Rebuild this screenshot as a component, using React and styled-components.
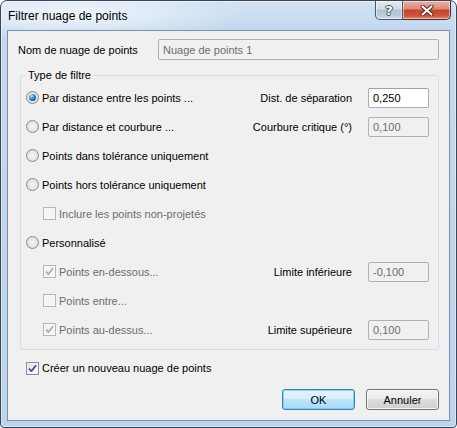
import React from 'react';
import styled, { createGlobalStyle } from 'styled-components';

const GlobalStyle = createGlobalStyle`
  html, body {
    margin: 0;
    padding: 0;
    background: #ffffff;
  }
  body {
    font-family: "Liberation Sans", Arial, sans-serif;
    font-size: 11px;
    color: #000000;
  }
`;

const Window = styled.div`
  box-sizing: border-box;
  width: 457px;
  height: 428px;
  display: flex;
  flex-direction: column;
  border: 1px solid #3b4654;
  border-radius: 7px 7px 4px 4px;
  padding: 0 6px 6px 6px;
  background:
    radial-gradient(ellipse 170px 26px at 70px 14px, rgba(255, 255, 255, 0.75), rgba(255, 255, 255, 0) 100%),
    linear-gradient(to bottom, #d3e3f4 0px, #c2d8ef 30px, #bcd4ee 100%);
  box-shadow: inset 0 0 0 1px rgba(255, 255, 255, 0.45);
`;

const TitleBar = styled.div`
  height: 29px;
  flex: none;
  display: flex;
  justify-content: space-between;
  align-items: flex-start;
`;

const Title = styled.div`
  padding: 7px 0 0 1px;
  font-size: 12px;
  line-height: 16px;
  color: #000000;
`;

const CaptionButtons = styled.div`
  display: flex;
  margin-right: -1px;
`;

const CaptionButton = styled.div`
  box-sizing: border-box;
  width: ${p => (p.$kind === 'close' ? 48 : 28)}px;
  height: 19px;
  display: flex;
  align-items: center;
  justify-content: center;
  border: 1px solid ${p => (p.$kind === 'close' ? '#4c2a2a' : '#4a5868')};
  border-top: none;
  border-left-width: ${p => (p.$kind === 'close' ? 0 : 1)}px;
  border-radius: ${p => (p.$kind === 'close' ? '0 0 5px 0' : '0 0 0 5px')};
  background: ${p =>
    p.$kind === 'close'
      ? 'linear-gradient(to bottom, #eab0a3 0%, #dc8a78 45%, #c6432a 50%, #cf5437 80%, #e2875f 100%)'
      : 'linear-gradient(to bottom, #e4ebf3 0%, #cfdae6 45%, #b4c3d4 50%, #bccbdc 80%, #d2e0ee 100%)'};
  box-shadow: inset 0 0 0 1px rgba(255, 255, 255, 0.5);
`;

const HelpGlyph = styled.span`
  font-family: "DejaVu Sans", sans-serif;
  font-weight: bold;
  font-size: 13px;
  line-height: 13px;
  color: #ffffff;
  text-shadow: 1px 0 0 #3d4a5a, -1px 0 0 #3d4a5a, 0 1px 0 #3d4a5a, 0 -1px 0 #3d4a5a;
`;

const Client = styled.div`
  box-sizing: border-box;
  flex: 1;
  display: flex;
  flex-direction: column;
  border: 1px solid #7f8fa3;
  background: #f0f0f0;
  padding: 8px 10px 10px 10px;
`;

const NameRow = styled.div`
  display: flex;
  align-items: center;
  height: 21px;
`;

const NameLabel = styled.div`
  width: 140px;
  flex: none;
`;

const Field = styled.div`
  box-sizing: border-box;
  height: ${p => p.$h || 20}px;
  flex: 1;
  display: flex;
  align-items: center;
  padding: 0 4px;
  border: 1px solid ${p => (p.$disabled ? '#adb2b5' : '#abadb3')};
  border-top-color: ${p => (p.$disabled ? '#adb2b5' : '#9da1a8')};
  border-radius: 2px;
  background: ${p => (p.$disabled ? '#f0f0f0' : '#ffffff')};
  color: ${p => (p.$disabled ? '#6d6d6d' : '#000000')};
`;

const Group = styled.fieldset`
  margin: 7px 0 0 2px;
  padding: 0 9px 5px 5px;
  border: 1px solid #d5dfe5;
  border-radius: 3px;
  min-width: 0;
`;

const Legend = styled.legend`
  padding: 0 2px;
  line-height: 16px;
`;

const OptionRow = styled.div`
  height: ${p => p.$h || 29}px;
  display: grid;
  grid-template-columns: 1fr auto 61px;
  column-gap: 16px;
  align-items: center;
`;

const Option = styled.div`
  display: flex;
  align-items: center;
  gap: 3px;
  padding-left: ${p => p.$indent || 0}px;
  color: ${p => (p.$disabled ? '#6d6d6d' : '#000000')};
  white-space: nowrap;
`;

const RightLabel = styled.div`
  text-align: right;
  white-space: nowrap;
`;

const RadioMark = styled.span`
  box-sizing: border-box;
  width: 13px;
  height: 13px;
  flex: none;
  border-radius: 50%;
  border: 1px solid #8a8c8e;
  background: radial-gradient(circle at 50% 50%, #f6f6f6 0%, #e6e6e6 55%, #c9c9c9 100%);
  display: flex;
  align-items: center;
  justify-content: center;

  &::after {
    content: '';
    display: ${p => (p.$checked ? 'block' : 'none')};
    width: 7px;
    height: 7px;
    border-radius: 50%;
    background: radial-gradient(circle at 35% 30%, #b9e4fb 0%, #3c8fd6 40%, #0e4e94 80%, #1c3a66 100%);
  }
`;

const CheckMark = styled.span`
  box-sizing: border-box;
  width: 13px;
  height: 13px;
  flex: none;
  border: 1px solid ${p => (p.$disabled ? '#b6b6b6' : '#8a8c8e')};
  background: ${p =>
    p.$disabled
      ? '#f4f4f4'
      : 'linear-gradient(135deg, #dcdcdc 0%, #f0f0f0 50%, #ffffff 100%)'};
  box-shadow: inset 0 0 0 1px ${p => (p.$disabled ? '#f8f8f8' : '#f4f4f4')};
  display: flex;
  align-items: center;
  justify-content: center;
`;

const Footer = styled.div`
  height: 20px;
  margin: 8px 0 0 8px;
  display: flex;
  align-items: center;
`;

const ButtonBar = styled.div`
  margin-top: 11px;
  display: flex;
  justify-content: flex-end;
  gap: 11px;
`;

const DialogButton = styled.div`
  box-sizing: border-box;
  width: 73px;
  height: 21px;
  display: flex;
  align-items: center;
  justify-content: center;
  border-radius: 3px;
  border: 1px solid ${p => (p.$primary ? '#3c7fb1' : '#707070')};
  background: ${p =>
    p.$primary
      ? 'linear-gradient(to bottom, #e5f4fc 0%, #d7eefb 48%, #bde4f9 50%, #a9d9f5 100%)'
      : 'linear-gradient(to bottom, #f2f2f2 0%, #ebebeb 48%, #dddddd 50%, #cfcfcf 100%)'};
  box-shadow: inset 0 0 0 1px ${p => (p.$primary ? 'rgba(91, 202, 245, 0.7)' : 'rgba(255, 255, 255, 0.8)')};
`;

const Radio = ({ checked, children }) => (
  <Option>
    <RadioMark $checked={checked} />
    <span>{children}</span>
  </Option>
);

const Check = ({ checked, disabled, indent, children }) => (
  <Option $indent={indent} $disabled={disabled}>
    <CheckMark $disabled={disabled}>
      {checked && (
        <svg width="9" height="9" viewBox="0 0 9 9">
          <path
            d="M1 4.6 L3.4 7.2 L8 1.2"
            fill="none"
            stroke={disabled ? '#a9a9a9' : '#2d4f9e'}
            strokeWidth="1.7"
            strokeLinejoin="round"
          />
        </svg>
      )}
    </CheckMark>
    <span>{children}</span>
  </Option>
);

const CloseIcon = () => (
  <svg width="14" height="11" viewBox="0 0 14 11">
    <path d="M2.5 1.5 L11.5 9.5 M11.5 1.5 L2.5 9.5" stroke="#4a2020" strokeWidth="4" strokeLinecap="round" />
    <path d="M2.5 1.5 L11.5 9.5 M11.5 1.5 L2.5 9.5" stroke="#ffffff" strokeWidth="2.2" strokeLinecap="round" />
  </svg>
);

const App = () => (
  <>
    <GlobalStyle />
    <Window>
      <TitleBar>
        <Title>Filtrer nuage de points</Title>
        <CaptionButtons>
          <CaptionButton $kind="help">
            <HelpGlyph>?</HelpGlyph>
          </CaptionButton>
          <CaptionButton $kind="close">
            <CloseIcon />
          </CaptionButton>
        </CaptionButtons>
      </TitleBar>
      <Client>
        <NameRow>
          <NameLabel>Nom de nuage de points</NameLabel>
          <Field $disabled $h={21}>Nuage de points 1</Field>
        </NameRow>

        <Group>
          <Legend>Type de filtre</Legend>
          <OptionRow>
            <Radio checked>Par distance entre les points ...</Radio>
            <RightLabel>Dist. de séparation</RightLabel>
            <Field>0,250</Field>
          </OptionRow>
          <OptionRow>
            <Radio>Par distance et courbure ...</Radio>
            <RightLabel>Courbure critique (°)</RightLabel>
            <Field $disabled>0,100</Field>
          </OptionRow>
          <OptionRow>
            <Radio>Points dans tolérance uniquement</Radio>
          </OptionRow>
          <OptionRow>
            <Radio>Points hors tolérance uniquement</Radio>
          </OptionRow>
          <OptionRow>
            <Check disabled indent={17}>Inclure les points non-projetés</Check>
          </OptionRow>
          <OptionRow>
            <Radio>Personnalisé</Radio>
          </OptionRow>
          <OptionRow>
            <Check checked disabled indent={17}>Points en-dessous...</Check>
            <RightLabel>Limite inférieure</RightLabel>
            <Field $disabled>-0,100</Field>
          </OptionRow>
          <OptionRow>
            <Check disabled indent={17}>Points entre...</Check>
          </OptionRow>
          <OptionRow>
            <Check checked disabled indent={17}>Points au-dessus...</Check>
            <RightLabel>Limite supérieure</RightLabel>
            <Field $disabled>0,100</Field>
          </OptionRow>
        </Group>

        <Footer>
          <Check checked>Créer un nouveau nuage de points</Check>
        </Footer>

        <ButtonBar>
          <DialogButton $primary>OK</DialogButton>
          <DialogButton>Annuler</DialogButton>
        </ButtonBar>
      </Client>
    </Window>
  </>
);

export default App;
